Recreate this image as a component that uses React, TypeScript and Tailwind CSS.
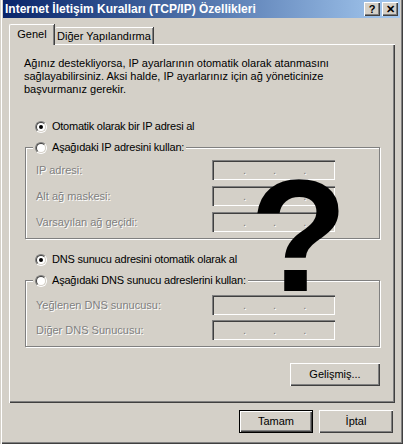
const raised =
  "bg-[#d4d0c8] shadow-[inset_1px_1px_#ffffff,inset_-1px_-1px_#404040,inset_-2px_-2px_#808080]";
const sunken =
  "shadow-[inset_1px_1px_#808080,inset_2px_2px_#404040,inset_-1px_-1px_#ffffff,inset_-2px_-2px_#d4d0c8]";
const disabledText = "text-[#808080] [text-shadow:1px_1px_0_#ffffff]";

function Radio({ checked }: { checked?: boolean }) {
  return (
    <span className="relative inline-flex w-[12px] h-[12px] shrink-0 rounded-full border border-t-[#808080] border-l-[#808080] border-b-white border-r-white">
      <span className="flex-1 rounded-full border border-t-[#404040] border-l-[#404040] border-b-[#d4d0c8] border-r-[#d4d0c8] bg-white flex items-center justify-center">
        {checked && <span className="w-[4px] h-[4px] rounded-full bg-black" />}
      </span>
    </span>
  );
}

function IpBox() {
  return (
    <div className={`w-[123px] h-[20px] bg-[#d4d0c8] ${sunken} flex items-center pl-[31px] gap-[27px] ${disabledText}`}>
      <span className="leading-none">.</span>
      <span className="leading-none">.</span>
      <span className="leading-none">.</span>
    </div>
  );
}

function Field({ label }: { label: string }) {
  return (
    <div className="flex items-center">
      <span className={`w-[176px] ${disabledText}`}>{label}</span>
      <IpBox />
    </div>
  );
}

function Group({ legend, fields, top, gap }: { legend: string; fields: string[]; top: string; gap: string }) {
  return (
    <fieldset className="border border-[#808080] shadow-[1px_1px_#ffffff,inset_1px_1px_#ffffff] pb-[6px]">
      <legend className="ml-[7px] px-[2px] bg-[#d4d0c8] flex items-center gap-[5px] h-[13px]">
        <Radio />
        <span className="tracking-[-0.2px]">{legend}</span>
      </legend>
      <div className={`flex flex-col pl-[10px] ${top} ${gap}`}>
        {fields.map((f) => (
          <Field key={f} label={f} />
        ))}
      </div>
    </fieldset>
  );
}

export default function App() {
  return (
    <div className="relative w-[403px] h-[444px] bg-[#d4d0c8] flex flex-col px-[3px] pb-[3px] font-['Liberation_Sans',Arial,sans-serif] text-[11px] leading-[13px] text-black shadow-[inset_1px_0_#d4d0c8,inset_2px_0_#ffffff,inset_-1px_-1px_#404040,inset_-2px_-2px_#808080] overflow-hidden">
      {/* title bar */}
      <div className="h-[18px] flex items-center justify-between pl-[2px] pr-[2px] bg-gradient-to-r from-[#0a246a] to-[#a6caf0]">
        <span className="text-white font-bold text-[12px]">Internet İletişim Kuralları (TCP/IP) Özellikleri</span>
        <div className="flex items-center">
          <span className={`w-[16px] h-[14px] ${raised} flex items-center justify-center font-bold text-[11px] leading-none`}>?</span>
          <span className={`ml-[2px] w-[16px] h-[14px] ${raised} flex items-center justify-center font-bold text-[11px] leading-none`}>✕</span>
        </div>
      </div>

      {/* tabs */}
      <div className="ml-[6px] mt-[6px] flex items-end relative z-10 -mb-[1px]">
        <div className="h-[21px] w-[45px] bg-[#d4d0c8] border-l border-t border-white rounded-tl-[2px] shadow-[inset_-1px_0_#808080,1px_0_#404040] flex items-start justify-center pt-[3px]">
          Genel
        </div>
        <div className="h-[17px] w-[98px] mb-[1px] ml-[1px] border-t border-white rounded-tl-[2px] shadow-[inset_-1px_0_#808080,1px_0_#404040] flex items-start justify-center pt-[2px]">
          Diğer Yapılandırma
        </div>
      </div>

      {/* panel */}
      <div className="ml-[6px] w-[386px] h-[359px] bg-[#d4d0c8] shadow-[inset_1px_1px_#ffffff,inset_-1px_-1px_#404040,inset_-2px_-2px_#808080] flex flex-col pl-[16px] pr-[15px]">
        <p className="mt-[13px] -ml-[1px]">
          Ağınız destekliyorsa, IP ayarlarının otomatik olarak atanmasını
          <br />
          sağlayabilirsiniz. Aksi halde, IP ayarlarınız için ağ yöneticinize
          <br />
          başvurmanız gerekir.
        </p>

        <div className="mt-[24px] ml-[10px] flex items-center gap-[5px]">
          <Radio checked />
          <span className="tracking-[-0.25px]">Otomatik olarak bir IP adresi al</span>
        </div>

        <div className="mt-[8px]">
          <Group
            legend="Aşağıdaki IP adresini kullan:"
            fields={["IP adresi:", "Alt ağ maskesi:", "Varsayılan ağ geçidi:"]}
            top="pt-[6px]"
            gap="gap-[6px]"
          />
        </div>

        <div className="mt-[14px] ml-[10px] flex items-center gap-[5px]">
          <Radio checked />
          <span className="tracking-[-0.2px]">DNS sunucu adresini otomatik olarak al</span>
        </div>

        <div className="mt-[8px]">
          <Group
            legend="Aşağıdaki DNS sunucu adreslerini kullan:"
            fields={["Yeğlenen DNS sunucusu:", "Diğer DNS Sunucusu:"]}
            top="pt-[8px]"
            gap="gap-[5px]"
          />
        </div>

        <div className="mt-[16px] flex justify-end">
          <button className={`w-[90px] h-[23px] ${raised} flex items-center justify-center`}>Gelişmiş...</button>
        </div>
      </div>

      {/* dialog buttons */}
      <div className="mt-[7px] mr-[7px] flex justify-end gap-[6px]">
        <button className="w-[74px] h-[23px] border border-black bg-[#d4d0c8] shadow-[inset_1px_1px_#ffffff,inset_-1px_-1px_#404040,inset_-2px_-2px_#808080] flex items-center justify-center">
          Tamam
        </button>
        <button className={`w-[74px] h-[23px] ${raised} flex items-center justify-center`}>İptal</button>
      </div>

      {/* pasted question mark */}
      <span className="absolute left-[250px] top-[156px] font-['Liberation_Sans',Arial,sans-serif] font-bold text-[160px] leading-none text-black pointer-events-none">
        ?
      </span>
    </div>
  );
}
